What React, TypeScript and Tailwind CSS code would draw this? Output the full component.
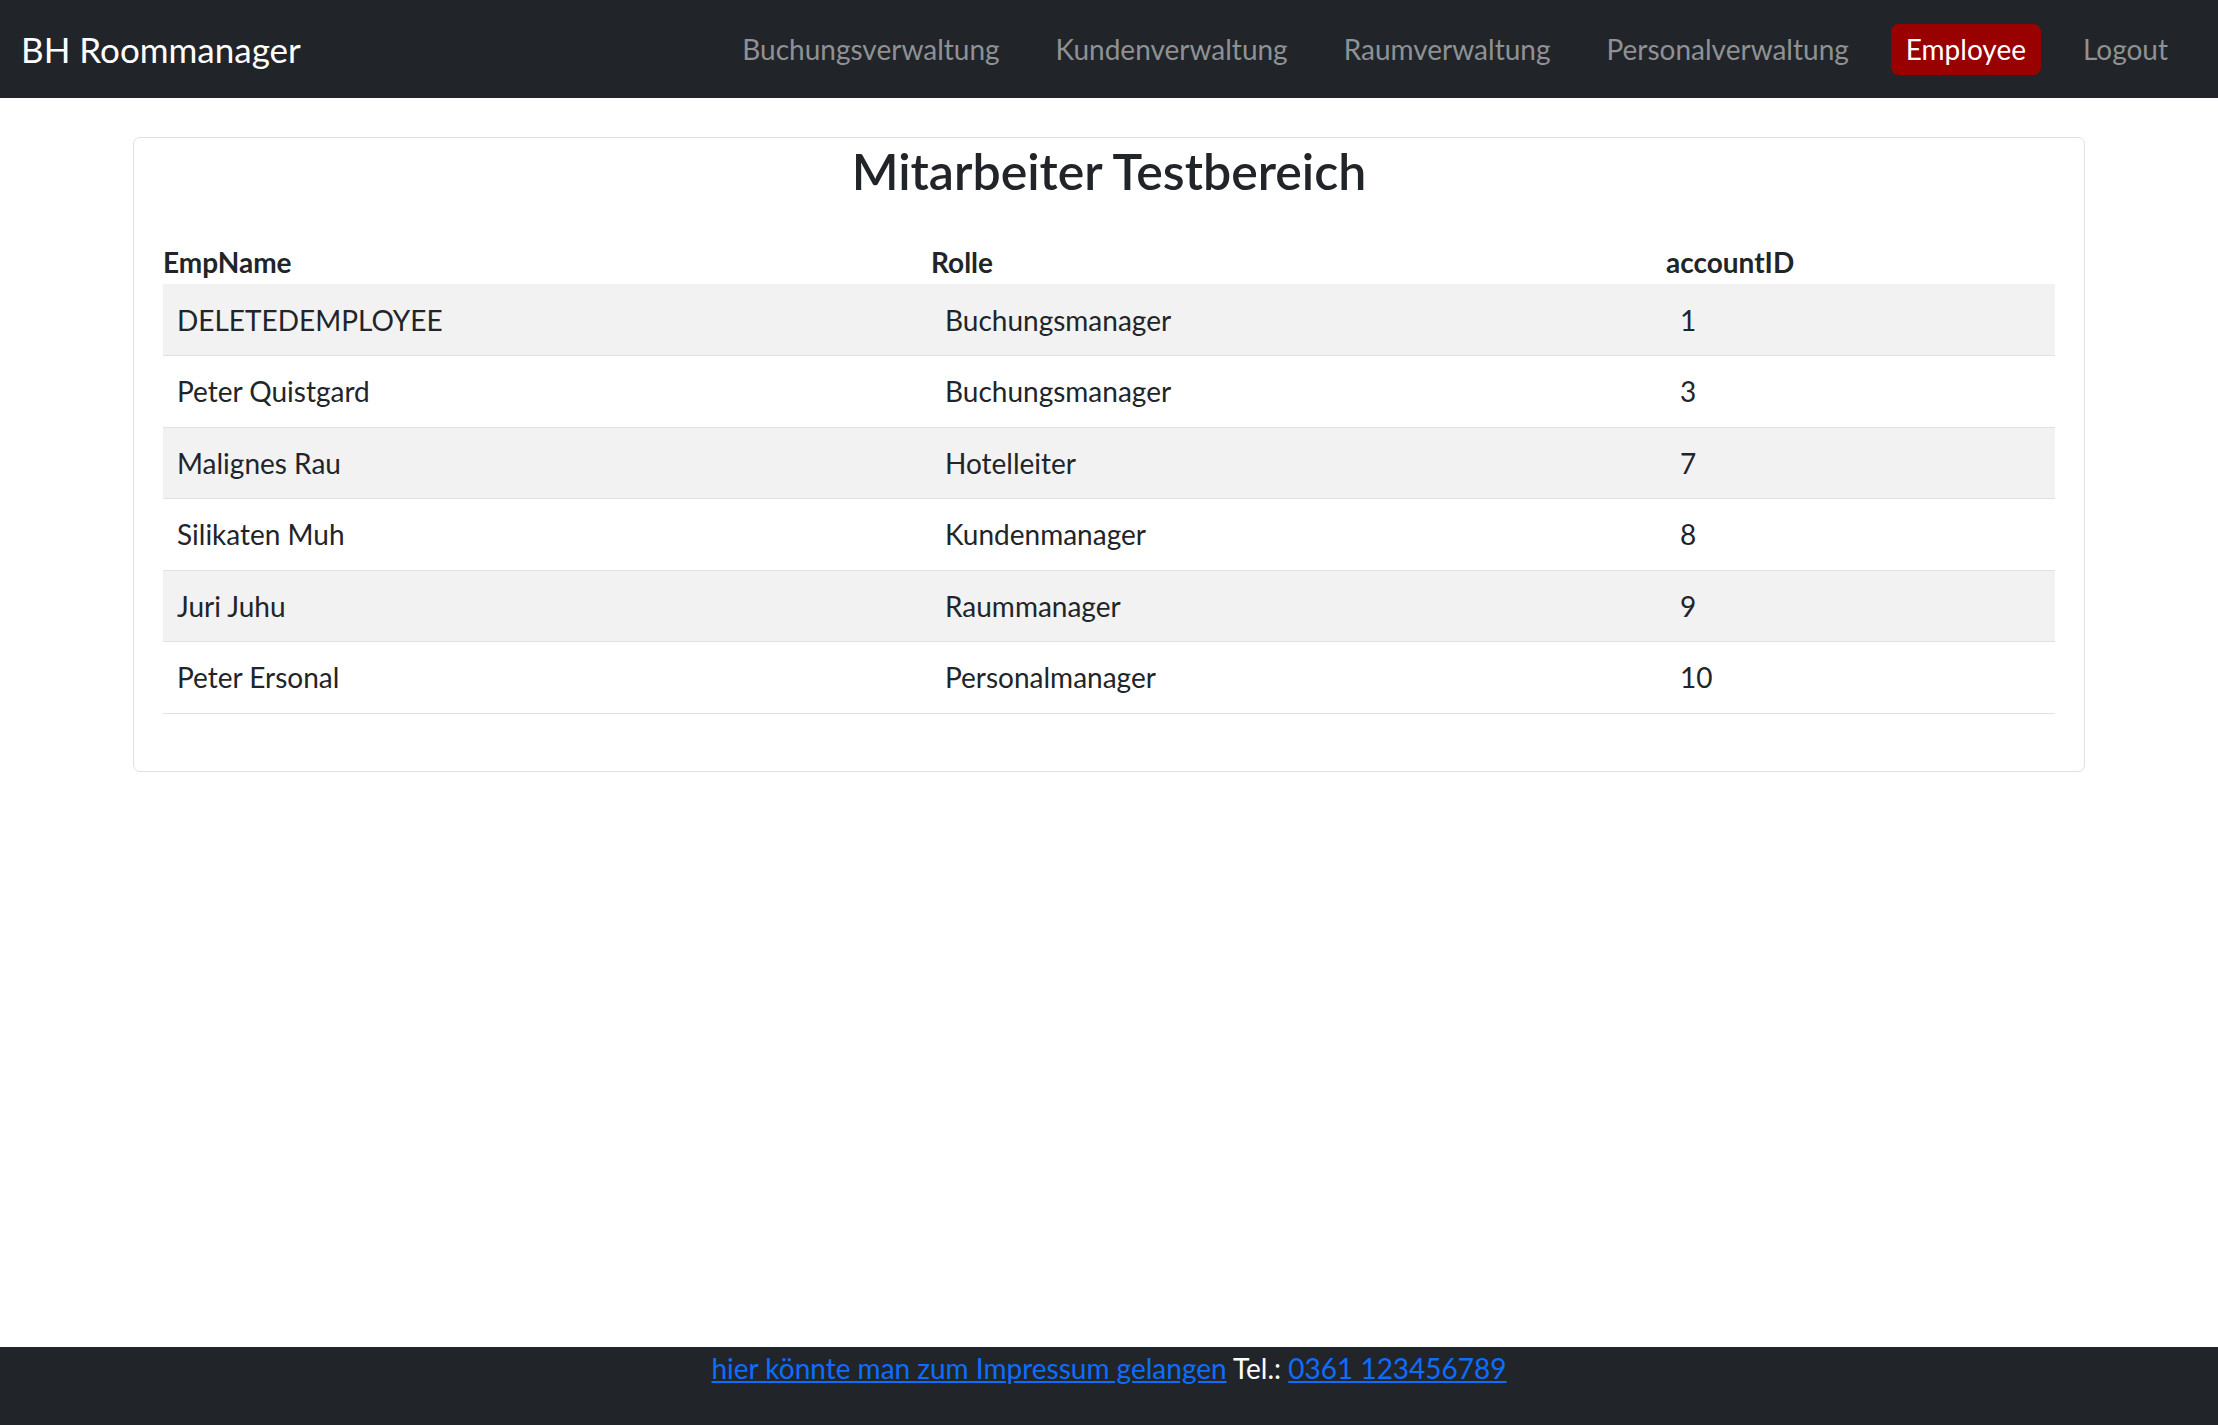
const employees = [
  { name: 'DELETEDEMPLOYEE', role: 'Buchungsmanager', id: 1 },
  { name: 'Peter Quistgard', role: 'Buchungsmanager', id: 3 },
  { name: 'Malignes Rau', role: 'Hotelleiter', id: 7 },
  { name: 'Silikaten Muh', role: 'Kundenmanager', id: 8 },
  { name: 'Juri Juhu', role: 'Raummanager', id: 9 },
  { name: 'Peter Ersonal', role: 'Personalmanager', id: 10 },
]

const links = ['Buchungsverwaltung', 'Kundenverwaltung', 'Raumverwaltung', 'Personalverwaltung']

export default function App() {
  return (
    <div className="min-h-screen flex flex-col bg-white text-[#212529] font-['Lato','Liberation_Sans',sans-serif]">
      <nav className="h-[98px] bg-[#212529] flex items-center justify-between pl-[21px] pr-[22px]">
        <a className="text-[35px] text-white leading-none">BH Roommanager</a>
        <ul className="flex items-center text-[28px]">
          {links.map((l) => (
            <li key={l} className="px-[28px] text-[#8f9194]">{l}</li>
          ))}
          <li className="mx-[14px] px-[15px] h-[51px] flex items-center rounded-[8px] bg-[#990000] text-white">Employee</li>
          <li className="px-[28px] text-[#8f9194]">Logout</li>
        </ul>
      </nav>

      <main className="flex-1 px-[133px] pt-[39px]">
        <div className="border border-[#dfe2e5] rounded-[7px] px-[29px] pb-[57px]">
          <h2 className="text-center text-[50px] font-semibold leading-[62px] pt-[2px]">Mitarbeiter Testbereich</h2>
          <table className="w-full mt-[39px] text-[28px] border-collapse">
            <thead>
              <tr className="leading-[43px] font-bold text-left">
                <th className="w-[768px] p-0">EmpName</th>
                <th className="w-[735px] p-0">Rolle</th>
                <th className="p-0">accountID</th>
              </tr>
            </thead>
            <tbody>
              {employees.map((e, i) => (
                <tr key={e.id} className={`h-[71.5px] border-b border-[#dee2e6] ${i % 2 === 0 ? 'bg-[#f2f2f2]' : ''}`}>
                  <td className="px-[14px]">{e.name}</td>
                  <td className="px-[14px]">{e.role}</td>
                  <td className="px-[14px]">{e.id}</td>
                </tr>
              ))}
            </tbody>
          </table>
        </div>
      </main>

      <footer className="h-[78px] bg-[#212529] flex justify-center text-[28px] leading-[42px] text-white">
        <p>
          <a className="text-[#0d6efd] underline">hier könnte man zum Impressum gelangen</a> Tel.:{' '}
          <a className="text-[#0d6efd] underline">0361 123456789</a>
        </p>
      </footer>
    </div>
  )
}
